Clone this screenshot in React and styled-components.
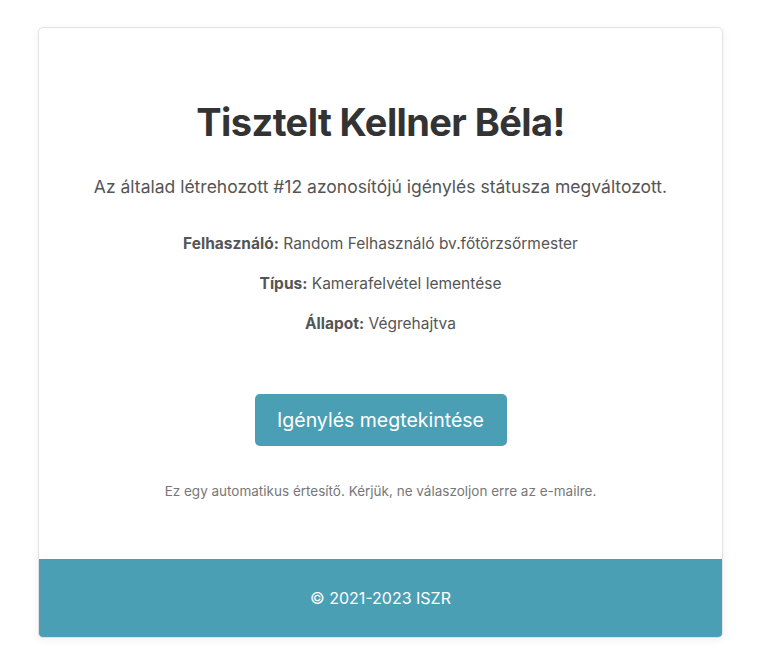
import styled, { createGlobalStyle } from "styled-components";

const GlobalStyle = createGlobalStyle`
  body {
    margin: 0;
    background: #ffffff;
    font-family: Inter, "Noto Sans", Arial, sans-serif;
  }
`;

export default function App() {
  return (
    <>
      <GlobalStyle />
      <Page>
        <Card>
          <Body>
            <Title>Tisztelt Kellner Béla!</Title>
            <Lead>Az általad létrehozott #12 azonosítójú igénylés státusza megváltozott.</Lead>
            <Details>
              <DetailRow>
                <strong>Felhasználó:</strong> Random Felhasználó bv.főtörzsőrmester
              </DetailRow>
              <DetailRow>
                <strong>Típus:</strong> Kamerafelvétel lementése
              </DetailRow>
              <DetailRow>
                <strong>Állapot:</strong> Végrehajtva
              </DetailRow>
            </Details>
            <ActionButton href="#">Igénylés megtekintése</ActionButton>
            <Notice>Ez egy automatikus értesítő. Kérjük, ne válaszoljon erre az e-mailre.</Notice>
          </Body>
          <Footer>© 2021-2023 ISZR</Footer>
        </Card>
      </Page>
    </>
  );
}

const Page = styled.div`
  padding: 27px 35px 30px 38px;
`;

const Card = styled.div`
  border: 1px solid #e2e2e2;
  border-radius: 5px;
  overflow: hidden;
  background: #fff;
  box-shadow: 0 2px 10px rgba(0, 0, 0, 0.06);
`;

const Body = styled.div`
  display: flex;
  flex-direction: column;
  align-items: center;
  padding: 72px 20px 59px;
  text-align: center;
`;

const Title = styled.h1`
  margin: 0;
  font-size: 38px;
  line-height: 44px;
  font-weight: 700;
  letter-spacing: -0.6px;
  color: #333;
`;

const Lead = styled.p`
  margin: 30px 0 0;
  font-size: 17.5px;
  line-height: 26px;
  color: #555;
`;

const Details = styled.div`
  display: flex;
  flex-direction: column;
  gap: 16px;
  margin-top: 32px;
`;

const DetailRow = styled.p`
  margin: 0;
  font-size: 15.5px;
  line-height: 24px;
  color: #555;

  strong {
    font-weight: 700;
  }
`;

const ActionButton = styled.a`
  display: inline-flex;
  align-items: center;
  justify-content: center;
  margin-top: 58px;
  width: 252px;
  height: 52px;
  border-radius: 5px;
  background: #4a9fb5;
  color: #fff;
  font-size: 19.5px;
  text-decoration: none;
`;

const Notice = styled.p`
  margin: 36px 0 0;
  font-size: 13.5px;
  line-height: 18px;
  color: #777;
`;

const Footer = styled.div`
  background: #4a9fb5;
  color: #fff;
  font-size: 16px;
  line-height: 78px;
  text-align: center;
`;
